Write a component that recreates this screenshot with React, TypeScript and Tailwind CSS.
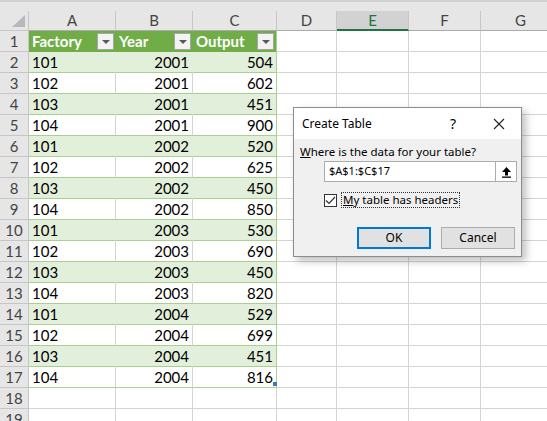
const rows: [string, string, string][] = [
  ["101", "2001", "504"],
  ["102", "2001", "602"],
  ["103", "2001", "451"],
  ["104", "2001", "900"],
  ["101", "2002", "520"],
  ["102", "2002", "625"],
  ["103", "2002", "450"],
  ["104", "2002", "850"],
  ["101", "2003", "530"],
  ["102", "2003", "690"],
  ["103", "2003", "450"],
  ["104", "2003", "820"],
  ["101", "2004", "529"],
  ["102", "2004", "699"],
  ["103", "2004", "451"],
  ["104", "2004", "816"],
];

const cols = ["A", "B", "C", "D", "E", "F", "G"];

function FilterBtn() {
  return (
    <div className="w-[17px] h-[17px] bg-[#f3f3f3] border border-[#a6a6a6] flex items-center justify-center shrink-0">
      <div className="w-0 h-0 border-l-[4px] border-r-[4px] border-t-[4px] border-l-transparent border-r-transparent border-t-[#595959]" />
    </div>
  );
}

function HeaderCell({ label, last }: { label: string; last?: boolean }) {
  return (
    <div className={`h-[21px] bg-[#70ad47] flex items-center justify-between pl-[3px] pr-[2px] ${last ? "border-r border-r-[#a9d08e]" : ""}`}>
      <span className="text-white font-bold">{label}</span>
      <FilterBtn />
    </div>
  );
}

function Dialog() {
  return (
    <div className="absolute left-[293px] top-[107px] w-[229px] h-[150px] bg-[#f0f0f0] border border-[#8c8c8c] shadow-[4px_4px_8px_rgba(0,0,0,0.25)] font-['Noto_Sans',sans-serif] text-[11px] text-black">
      <div className="h-[31px] bg-white flex items-center pl-[8px] text-[12px]">
        <span className="flex-1">Create Table</span>
        <span className="w-[20px] text-center mr-[30px] text-[14px]">?</span>
        <svg width="12" height="12" viewBox="0 0 12 12" className="mr-[16px]">
          <path d="M1 1 L11 11 M11 1 L1 11" stroke="#222" strokeWidth="1.1" />
        </svg>
      </div>
      <div className="pl-[6px] pt-[5px]">
        <div className="leading-[16px] text-[11.5px]">
          <span className="underline">W</span>here is the data for your table?
        </div>
        <div className="ml-[24px] mt-[1px] w-[193px] h-[21px] bg-white border border-[#acacac] flex items-center">
          <span className="flex-1 pl-[4px]">$A$1:$C$17</span>
          <div className="w-[21px] h-[19px] border-l border-[#acacac] bg-white flex items-center justify-center">
            <svg width="11" height="12" viewBox="0 0 11 12">
              <path d="M5.5 1 L10 6 L7 6 L7 9.5 L4 9.5 L4 6 L1 6 Z" fill="#000" />
              <rect x="1" y="10.5" width="9" height="1.3" fill="#000" />
            </svg>
          </div>
        </div>
        <div className="ml-[24px] mt-[10px] flex items-center gap-[4px]">
          <div className="w-[13px] h-[13px] border border-[#333] bg-white flex items-center justify-center">
            <svg width="11" height="9" viewBox="0 0 11 9">
              <path d="M1 4.5 L4 7.5 L10 1" stroke="#333" strokeWidth="1.2" fill="none" />
            </svg>
          </div>
          <span className="border border-dotted border-[#333] px-[1px] leading-[14px] text-[11.5px]">
            <span className="underline">M</span>y table has headers
          </span>
        </div>
        <div className="flex gap-[10px] ml-[57px] mt-[19px] text-[12px]">
          <div className="w-[74px] h-[22px] bg-[#e1e1e1] border-2 border-[#0078d7] flex items-center justify-center">OK</div>
          <div className="w-[74px] h-[22px] bg-[#e1e1e1] border border-[#adadad] flex items-center justify-center">Cancel</div>
        </div>
      </div>
    </div>
  );
}

export default function App() {
  return (
    <div className="relative w-[547px] h-[421px] overflow-hidden bg-white font-['Lato',sans-serif] text-[15px] text-black">
      <div className="h-[11px] bg-[#e6e6e6] border-t-2 border-t-[#d0d0d0]" />
      <div className="grid grid-cols-[29px_87px_77px_84px_60px_72px_72px_80px]">
        {/* column headers */}
        <div className="h-[20px] bg-[#e6e6e6] border-r border-b border-[#c6c6c6] relative">
          <svg width="13" height="12" viewBox="0 0 13 12" className="absolute right-[3px] bottom-[3px]">
            <path d="M13 0 L13 12 L0 12 Z" fill="#b9b9b9" />
          </svg>
        </div>
        {cols.map((c) => (
          <div
            key={c}
            className={`h-[20px] flex items-center justify-center border-r border-[#c6c6c6] text-[#444] ${
              c === "E" ? "bg-[#d2d2d2] border-b-2 border-b-[#217346] text-[#217346]" : "bg-[#e6e6e6] border-b border-b-[#ababab]"
            }`}
          >
            {c}
          </div>
        ))}

        {/* row 1: table header */}
        <div className="h-[21px] bg-[#e6e6e6] border-r border-b border-[#c6c6c6] flex items-center justify-center text-[#444]">1</div>
        <HeaderCell label="Factory" />
        <HeaderCell label="Year" />
        <HeaderCell label="Output" last />
        {[0, 1, 2, 3].map((i) => (
          <div key={i} className="h-[21px] border-r border-b border-[#d4d4d4]" />
        ))}

        {rows.map((r, i) => {
          const band = i % 2 === 0;
          const bg = band ? "bg-[#e2efda]" : "bg-white";
          const inner = band ? "border-r-[#e2efda]" : "border-r-[#d4d4d4]";
          return [
            <div key={`h${i}`} className="h-[21px] bg-[#e6e6e6] border-r border-b border-[#c6c6c6] flex items-center justify-center text-[#444]">
              {i + 2}
            </div>,
            <div key={`a${i}`} className={`h-[21px] ${bg} border-r ${inner} border-b border-b-[#a9d08e] flex items-center pl-[3px]`}>
              {r[0]}
            </div>,
            <div key={`b${i}`} className={`h-[21px] ${bg} border-r ${inner} border-b border-b-[#a9d08e] flex items-center justify-end pr-[3px]`}>
              {r[1]}
            </div>,
            <div key={`c${i}`} className={`relative h-[21px] ${bg} border-r border-r-[#a9d08e] border-b border-b-[#a9d08e] flex items-center justify-end pr-[3px]`}>
              {r[2]}
              {i === rows.length - 1 && <div className="absolute right-[-1px] bottom-[1px] w-[4px] h-[4px] bg-[#4472c4]" />}
            </div>,
            ...[0, 1, 2, 3].map((k) => <div key={`e${i}-${k}`} className="h-[21px] border-r border-b border-[#d4d4d4]" />),
          ];
        })}

        {[18, 19].map((n) => [
          <div key={`h${n}`} className="h-[21px] bg-[#e6e6e6] border-r border-b border-[#c6c6c6] flex items-center justify-center text-[#444]">
            {n}
          </div>,
          ...[0, 1, 2, 3, 4, 5, 6].map((k) => <div key={`r${n}-${k}`} className="h-[21px] border-r border-b border-[#d4d4d4]" />),
        ])}
      </div>
      <Dialog />
    </div>
  );
}
